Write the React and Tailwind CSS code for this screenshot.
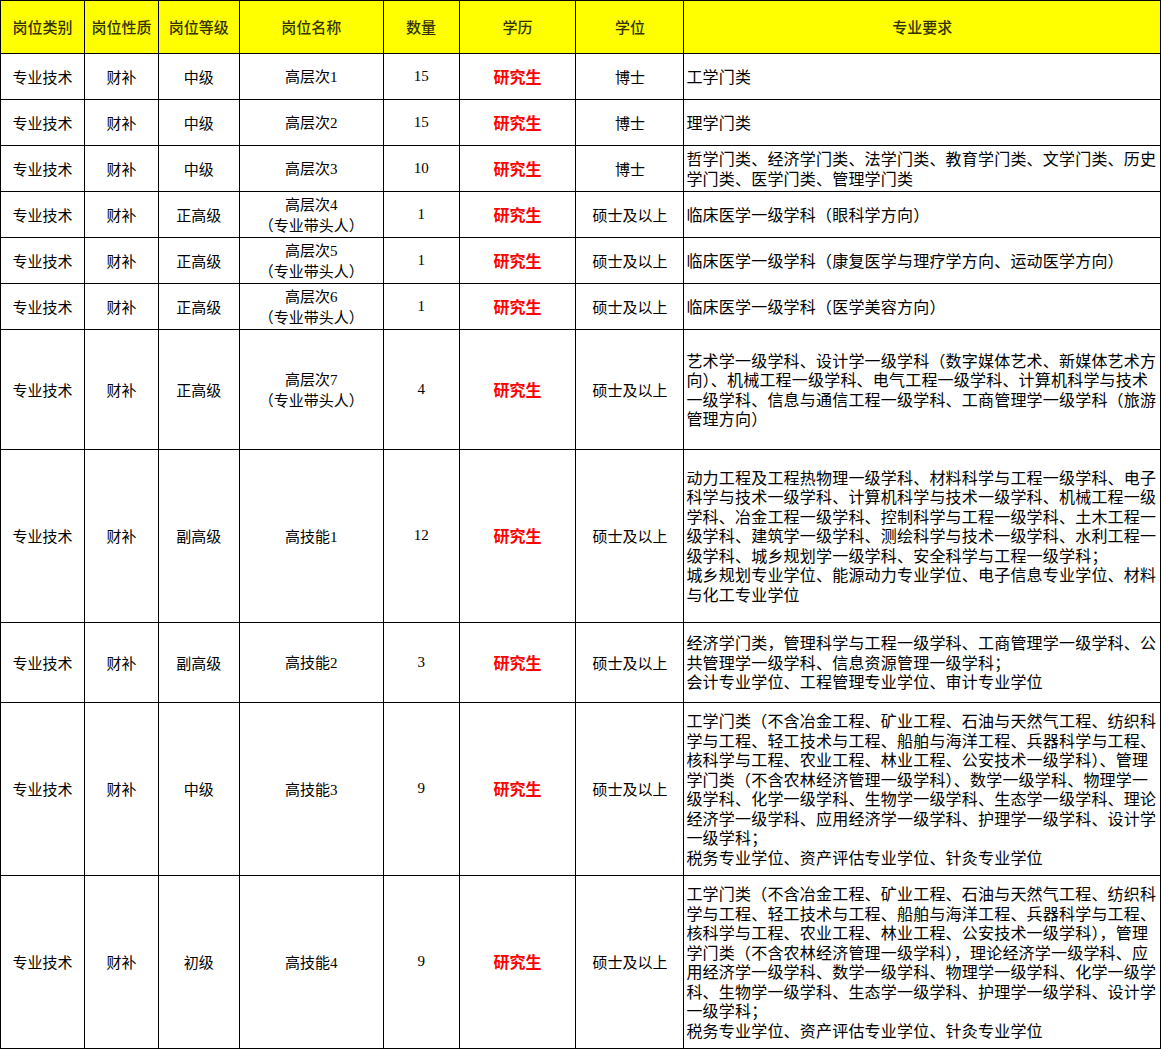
import React from "react";

const cols = [84, 74, 81, 144, 76, 117, 108, 477];
const heads = ["岗位类别", "岗位性质", "岗位等级", "岗位名称", "数量", "学历", "学位", "专业要求"];

const rows = [
  [46, "中级", ["高层次1"], "15", "博士", ["工学门类"]],
  [46, "中级", ["高层次2"], "15", "博士", ["理学门类"]],
  [46, "中级", ["高层次3"], "10", "博士", ["哲学门类、经济学门类、法学门类、教育学门类、文学门类、历史学门类、医学门类、管理学门类"]],
  [46, "正高级", ["高层次4", "（专业带头人）"], "1", "硕士及以上", ["临床医学一级学科（眼科学方向）"]],
  [46, "正高级", ["高层次5", "（专业带头人）"], "1", "硕士及以上", ["临床医学一级学科（康复医学与理疗学方向、运动医学方向）"]],
  [46, "正高级", ["高层次6", "（专业带头人）"], "1", "硕士及以上", ["临床医学一级学科（医学美容方向）"]],
  [120, "正高级", ["高层次7", "（专业带头人）"], "4", "硕士及以上", ["艺术学一级学科、设计学一级学科（数字媒体艺术、新媒体艺术方向）、机械工程一级学科、电气工程一级学科、计算机科学与技术一级学科、信息与通信工程一级学科、工商管理学一级学科（旅游管理方向）"]],
  [173, "副高级", ["高技能1"], "12", "硕士及以上", ["动力工程及工程热物理一级学科、材料科学与工程一级学科、电子科学与技术一级学科、计算机科学与技术一级学科、机械工程一级学科、冶金工程一级学科、控制科学与工程一级学科、土木工程一级学科、建筑学一级学科、测绘科学与技术一级学科、水利工程一级学科、城乡规划学一级学科、安全科学与工程一级学科；", "城乡规划专业学位、能源动力专业学位、电子信息专业学位、材料与化工专业学位"]],
  [80, "副高级", ["高技能2"], "3", "硕士及以上", ["经济学门类，管理科学与工程一级学科、工商管理学一级学科、公共管理学一级学科、信息资源管理一级学科；", "会计专业学位、工程管理专业学位、审计专业学位"]],
  [173, "中级", ["高技能3"], "9", "硕士及以上", ["工学门类（不含冶金工程、矿业工程、石油与天然气工程、纺织科学与工程、轻工技术与工程、船舶与海洋工程、兵器科学与工程、核科学与工程、农业工程、林业工程、公安技术一级学科）、管理学门类（不含农林经济管理一级学科）、数学一级学科、物理学一级学科、化学一级学科、生物学一级学科、生态学一级学科、理论经济学一级学科、应用经济学一级学科、护理学一级学科、设计学一级学科；", "税务专业学位、资产评估专业学位、针灸专业学位"]],
  [173, "初级", ["高技能4"], "9", "硕士及以上", ["工学门类（不含冶金工程、矿业工程、石油与天然气工程、纺织科学与工程、轻工技术与工程、船舶与海洋工程、兵器科学与工程、核科学与工程、农业工程、林业工程、公安技术一级学科），管理学门类（不含农林经济管理一级学科），理论经济学一级学科、应用经济学一级学科、数学一级学科、物理学一级学科、化学一级学科、生物学一级学科、生态学一级学科、护理学一级学科、设计学一级学科；", "税务专业学位、资产评估专业学位、针灸专业学位"]],
];

const cjk = { fontFamily: '"Noto Sans CJK SC", sans-serif' };
const serif = { fontFamily: '"Liberation Serif", "Noto Sans CJK SC", serif' };

export default function App() {
  return (
    <div className="bg-white w-[1161px] h-[1050px] overflow-hidden">
      <table className="table-fixed border-collapse text-black text-[15px] leading-[19.5px]" style={cjk}>
        <colgroup>
          {cols.map((w, i) => <col key={i} style={{ width: w }} />)}
        </colgroup>
        <thead>
          <tr className="h-[53px] bg-[#ffff00]">
            {heads.map((h) => (
              <th key={h} className="border border-black font-medium text-[15px] text-[#333300] text-center align-middle">{h}</th>
            ))}
          </tr>
        </thead>
        <tbody>
          {rows.map(([h, level, name, num, deg, req], i) => (
            <tr key={i} style={{ height: h }}>
              <td className="border border-black text-center">专业技术</td>
              <td className="border border-black text-center">财补</td>
              <td className="border border-black text-center">{level}</td>
              <td className="border border-black text-center leading-[19px]">
                {name.map((n) => <div key={n}>{n.replace(/\d/, "")}<span style={serif}>{(n.match(/\d/) || [""])[0]}</span></div>)}
              </td>
              <td className="border border-black text-center" style={serif}>{num}</td>
              <td className="border border-black text-center font-bold text-[#ff0000] text-[16px]">研究生</td>
              <td className="border border-black text-center">{deg}</td>
              <td className="border border-black text-left pl-[2px] pr-0 text-[16px] tracking-[0.2px] leading-[19.5px]">
                {req.map((r) => <div key={r}>{r}</div>)}
              </td>
            </tr>
          ))}
        </tbody>
      </table>
    </div>
  );
}
